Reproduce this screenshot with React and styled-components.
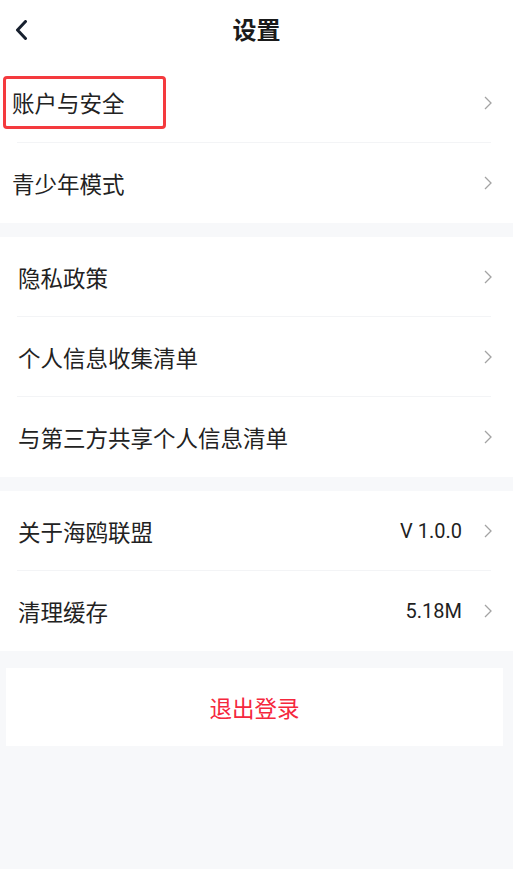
import React from "react";
import styled, { createGlobalStyle } from "styled-components";

const Global = createGlobalStyle`
  html, body { margin: 0; padding: 0; background: #f7f8fa; }
  body { font-family: Roboto, "Noto Sans CJK SC", sans-serif; }
  #root { min-height: 869px; }
`;

const Page = styled.div`
  width: 513px;
  min-height: 869px;
  background: #f7f8fa;
  display: flex;
  flex-direction: column;
`;

const Header = styled.header`
  height: 63px;
  background: #fff;
  display: grid;
  grid-template-columns: 60px 1fr 60px;
  align-items: center;
`;

const BackButton = styled.button`
  border: 0;
  background: none;
  padding: 0 0 0 14px;
  height: 63px;
  display: flex;
  align-items: center;
  justify-content: flex-start;
  cursor: pointer;
  margin-top: -4px;
`;

const Title = styled.h1`
  margin: -6px 0 0;
  text-align: center;
  font-size: 24px;
  font-weight: 700;
  color: #1a1a1a;
  font-family: "Noto Sans CJK SC", sans-serif;
`;

const Section = styled.section`
  background: #fff;
  margin-top: ${(p) => p.$gap || 0}px;
`;

const Row = styled.div`
  position: relative;
  height: 80px;
  display: flex;
  align-items: center;
  padding: 0 21px 0 ${(p) => p.$inset || 18}px;
  &:not(:last-child)::after {
    content: "";
    position: absolute;
    left: 17px;
    right: 22px;
    bottom: 0;
    height: 1px;
    background: #f3f4f6;
  }
`;

const Label = styled.span`
  flex: 1;
  font-size: 22.5px;
  color: #222;
  font-family: "Noto Sans CJK SC", sans-serif;
  line-height: 27px;
`;

const Highlight = styled.span`
  display: inline-block;
  border: 3px solid #f43a3e;
  border-radius: 4px;
  padding: 10px 38px 10px 6px;
  margin-left: -9px;
  margin-top: -1px;
`;

const Value = styled.span`
  font-family: Roboto, sans-serif;
  font-size: 20px;
  color: #1f1f1f;
  margin-right: 22px;
`;

const ChevronIcon = styled.svg`
  width: 8px;
  height: 14px;
  flex: none;
`;

const LogoutCard = styled.button`
  margin: 17px 10px 0 6px;
  height: 78px;
  border: 0;
  background: #fff;
  color: #f5283d;
  font-size: 22.5px;
  font-family: "Noto Sans CJK SC", sans-serif;
  cursor: pointer;
  padding: 0;
`;

const Chevron = () => (
  <ChevronIcon viewBox="0 0 8 14">
    <polyline points="1,1 7,7 1,13" fill="none" stroke="#a3a3a3" strokeWidth="1.3" />
  </ChevronIcon>
);

const BackIcon = () => (
  <svg width="14" height="20" viewBox="0 0 14 20">
    <polyline points="11.5,1.5 3.5,10 11.5,18.5" fill="none" stroke="#17202e" strokeWidth="3" strokeLinecap="round" strokeLinejoin="round" />
  </svg>
);

const sections = [
  {
    gap: 0,
    inset: 12,
    rows: [{ label: "账户与安全", highlight: true }, { label: "青少年模式" }],
  },
  {
    gap: 14,
    rows: [
      { label: "隐私政策" },
      { label: "个人信息收集清单" },
      { label: "与第三方共享个人信息清单" },
    ],
  },
  {
    gap: 14,
    rows: [
      { label: "关于海鸥联盟", value: "V 1.0.0" },
      { label: "清理缓存", value: "5.18M" },
    ],
  },
];

export default function App() {
  return (
    <>
      <Global />
      <Page>
        <Header>
          <BackButton aria-label="返回">
            <BackIcon />
          </BackButton>
          <Title>设置</Title>
          <span />
        </Header>
        {sections.map((s, i) => (
          <Section key={i} $gap={s.gap}>
            {s.rows.map((r) => (
              <Row key={r.label} $inset={s.inset}>
                <Label>
                  {r.highlight ? <Highlight>{r.label}</Highlight> : r.label}
                </Label>
                {r.value && <Value>{r.value}</Value>}
                <Chevron />
              </Row>
            ))}
          </Section>
        ))}
        <LogoutCard>退出登录</LogoutCard>
      </Page>
    </>
  );
}
